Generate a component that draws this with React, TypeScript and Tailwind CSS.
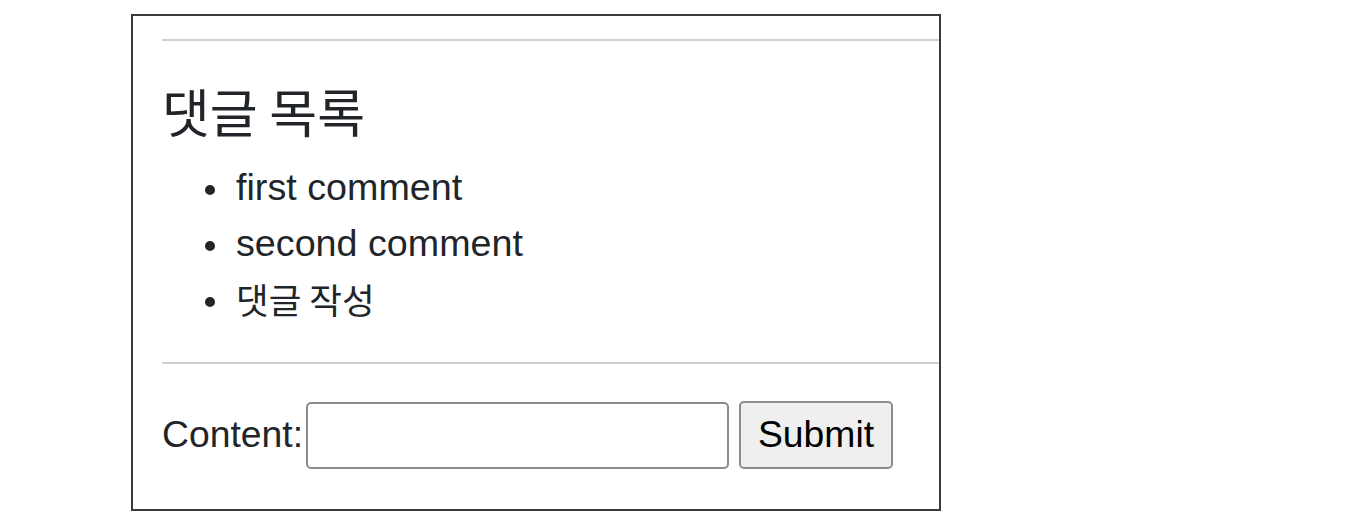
import React from "react";

const latin = "font-['Liberation_Sans','Noto_Sans_CJK_KR',sans-serif]";
const korean = "font-['Noto_Sans_CJK_KR','Liberation_Sans',sans-serif]";

function Bullet() {
  return (
    <span className="w-[74px] shrink-0 flex justify-end pr-[21px]">
      <span className="block w-[10px] h-[10px] rounded-full bg-[#212529] translate-y-[3px]" />
    </span>
  );
}

export default function App() {
  return (
    <div className="w-[1345px] h-[530px] bg-white pt-[14px] pl-[131px] text-[#212529]">
      <div className="w-[810px] border-2 border-[#3a3a3a] pl-[29px] overflow-hidden">
        <div className="mt-[23px] h-[2px] bg-[#d0d0d0]" />
        <h2 className={`${korean} mt-[40px] h-[61px] leading-[60px] text-[52px] font-normal`}>
          댓글 목록
        </h2>
        <ul className="mt-[17px]">
          <li className={`${latin} flex items-center h-[56px] text-[37.7px]`}>
            <Bullet />
            <span className="leading-[56px]">first comment</span>
          </li>
          <li className={`${latin} flex items-center h-[56px] text-[37.7px]`}>
            <Bullet />
            <span className="leading-[56px]">second comment</span>
          </li>
          <li className={`${korean} flex items-center h-[56px] text-[35.5px]`}>
            <Bullet />
            <span className="leading-[56px]">댓글 작성</span>
          </li>
        </ul>
        <div className="mt-[35px] h-[2px] bg-[#d0d0d0]" />
        <form className={`${latin} mt-[37px] mb-[40px] h-[68px] flex items-center text-[37.3px]`}>
          <label className="leading-none">Content:</label>
          <input
            type="text"
            className="ml-[3px] w-[423px] h-[67px] border-2 border-[#8c8c8c] rounded-[5px] bg-white outline-none"
          />
          <button
            type="button"
            className="ml-[10px] w-[154px] h-[68px] border-2 border-[#8c8c8c] rounded-[5px] bg-[#efefef] text-black leading-none"
          >
            Submit
          </button>
        </form>
      </div>
    </div>
  );
}
